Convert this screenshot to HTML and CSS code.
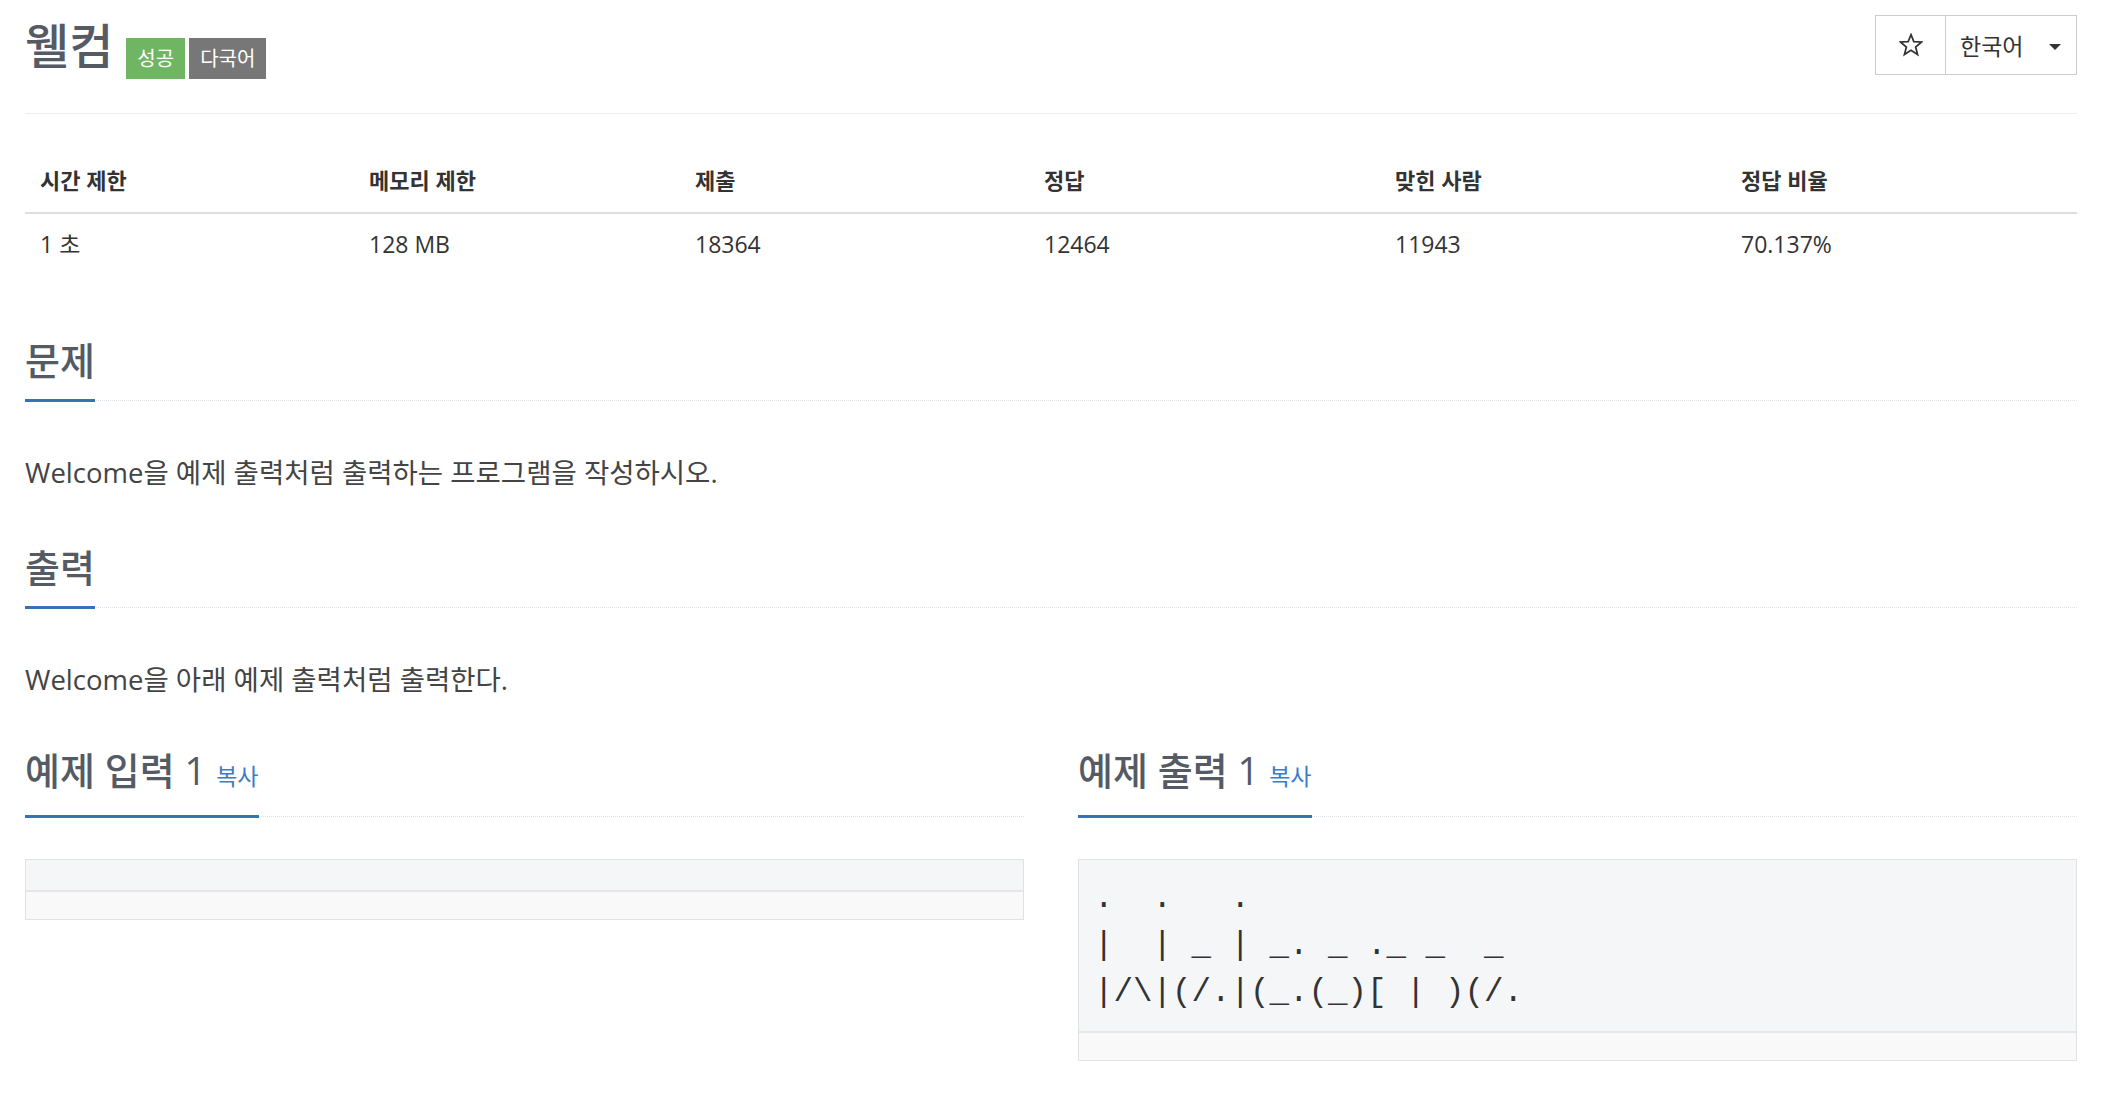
FILE: index.html
```html
<!DOCTYPE html>
<html lang="ko">
<head>
<meta charset="utf-8">
<title>웰컴</title>
<link rel="stylesheet" href="styles.css">
</head>
<body>
<div class="page">
  <div class="top">
    <h1 class="title"><span class="title-text">웰컴</span><span class="badge badge-success">성공</span><span class="badge badge-gray">다국어</span></h1>
    <div class="btn-group">
      <div class="btn btn-star"><svg width="24" height="24" viewBox="0 0 24 24"><path d="M12 1.6 L14.8 8.6 L22.6 9 L16.6 14 L18.6 21.5 L12 17.3 L5.4 21.5 L7.4 14 L1.4 9 L9.2 8.6 Z" fill="none" stroke="#333" stroke-width="1.7" stroke-linejoin="miter"/></svg></div>
      <div class="btn btn-lang"><span>한국어</span><span class="caret"></span></div>
    </div>
  </div>

  <table class="info">
    <thead>
      <tr><th>시간 제한</th><th>메모리 제한</th><th>제출</th><th>정답</th><th>맞힌 사람</th><th>정답 비율</th></tr>
    </thead>
    <tbody>
      <tr><td>1 초</td><td>128 MB</td><td>18364</td><td>12464</td><td>11943</td><td>70.137%</td></tr>
    </tbody>
  </table>

  <section class="section first">
    <div class="headline"><h2>문제</h2></div>
    <p class="text">Welcome을 예제 출력처럼 출력하는 프로그램을 작성하시오.</p>
  </section>

  <section class="section">
    <div class="headline"><h2>출력</h2></div>
    <p class="text">Welcome을 아래 예제 출력처럼 출력한다.</p>
  </section>

  <div class="samples">
    <section class="sample">
      <div class="headline"><h2>예제 입력 1 <a class="copy" href="#">복사</a></h2></div>
      <div class="sample-box">
        <pre class="sampledata"></pre>
        <div class="sample-foot"></div>
      </div>
    </section>
    <section class="sample">
      <div class="headline"><h2>예제 출력 1 <a class="copy" href="#">복사</a></h2></div>
      <div class="sample-box">
        <pre class="sampledata">.  .   .
|  | _ | _. _ ._ _  _
|/\|(/.|(_.(_)[ | )(/.</pre>
        <div class="sample-foot"></div>
      </div>
    </section>
  </div>
</div>
</body>
</html>
```

FILE: styles.css
```css
html, body {
  margin: 0;
  padding: 0;
  background: #fff;
}

body {
  font-family: "Open Sans", "Noto Sans CJK KR", sans-serif;
  color: #333;
}

.page {
  padding: 0 35px 0 25px;
}

.top {
  display: flex;
  justify-content: space-between;
  align-items: flex-start;
  height: 98px;
  padding-top: 15px;
  border-bottom: 1px solid #eee;
}

.title {
  margin: 3px 0 0;
  display: flex;
  align-items: flex-start;
  font-weight: 500;
}

.title-text {
  font-size: 48px;
  line-height: 56px;
  color: #555b65;
  margin-right: 13px;
}

.badge {
  display: inline-block;
  margin-top: 20px;
  height: 41px;
  line-height: 41px;
  padding: 0 11px;
  font-size: 20px;
  font-weight: 400;
  color: #fff;
  margin-right: 4px;
}

.badge-success {
  background: #70b563;
}

.badge-gray {
  background: #777;
  padding: 0 11px;
}

.btn-group {
  display: flex;
  height: 60px;
  border: 1px solid #ccc;
  box-sizing: border-box;
}

.btn {
  display: flex;
  align-items: center;
  justify-content: center;
  box-sizing: border-box;
  color: #333;
}

.btn-star {
  width: 70px;
  border-right: 1px solid #ccc;
}

.btn-star svg {
  display: block;
}

.btn-lang {
  width: 130px;
  font-size: 23px;
  padding: 0 15px 0 14px;
  justify-content: space-between;
}

.caret {
  display: inline-block;
  width: 0;
  height: 0;
  border-top: 6px solid #333;
  border-left: 6px solid transparent;
  border-right: 6px solid transparent;
  margin-top: 3px;
}

.info {
  width: 2052px;
  margin-top: 38px;
  border-collapse: collapse;
  table-layout: fixed;
  line-height: 28px;
}

.info th,
.info td {
  text-align: left;
  padding: 16px 15px;
  color: #333;
}

.info th {
  padding: 14px 15px 18px;
  font-size: 22px;
  font-weight: 700;
  border-bottom: 2px solid #ddd;
}

.info td {
  font-size: 23px;
}

.info th:nth-child(1) { width: 299px; }
.info th:nth-child(2) { width: 296px; }
.info th:nth-child(3) { width: 319px; }
.info th:nth-child(4) { width: 321px; }
.info th:nth-child(5) { width: 316px; }
.info th:nth-child(6) { width: 321px; }

.section {
  margin-top: 55px;
}

.section.first {
  margin-top: 65px;
}

.headline {
  border-bottom: 1px dotted #dde2e8;
}

.headline h2 {
  display: inline-block;
  margin: 0 0 -2px;
  padding-bottom: 18px;
  border-bottom: 3px solid #3573b6;
  font-size: 38px;
  line-height: 42px;
  font-weight: 500;
  color: #555b65;
}

.text {
  margin: 54px 0 0;
  font-size: 27.5px;
  line-height: 36px;
  color: #444;
}

.section + .section .text {
  margin-top: 54px;
}

.samples {
  display: grid;
  grid-template-columns: 1fr 1fr;
  column-gap: 54px;
  margin-top: 51px;
}

.copy {
  font-size: 23px;
  color: #3a7bc8;
  text-decoration: none;
  font-weight: 400;
}

.sample-box {
  margin-top: 42px;
  border: 1px solid #e1e1e6;
}

.sampledata {
  margin: 0;
  padding: 15px;
  background: #f5f6f8;
  font-family: "Liberation Mono", "DejaVu Sans Mono", monospace;
  font-size: 32.5px;
  line-height: 47px;
  color: #333;
  border-bottom: 2px solid #e6e6e9;
}

.sample-foot {
  height: 27px;
  background: #f9f9fa;
}
```
